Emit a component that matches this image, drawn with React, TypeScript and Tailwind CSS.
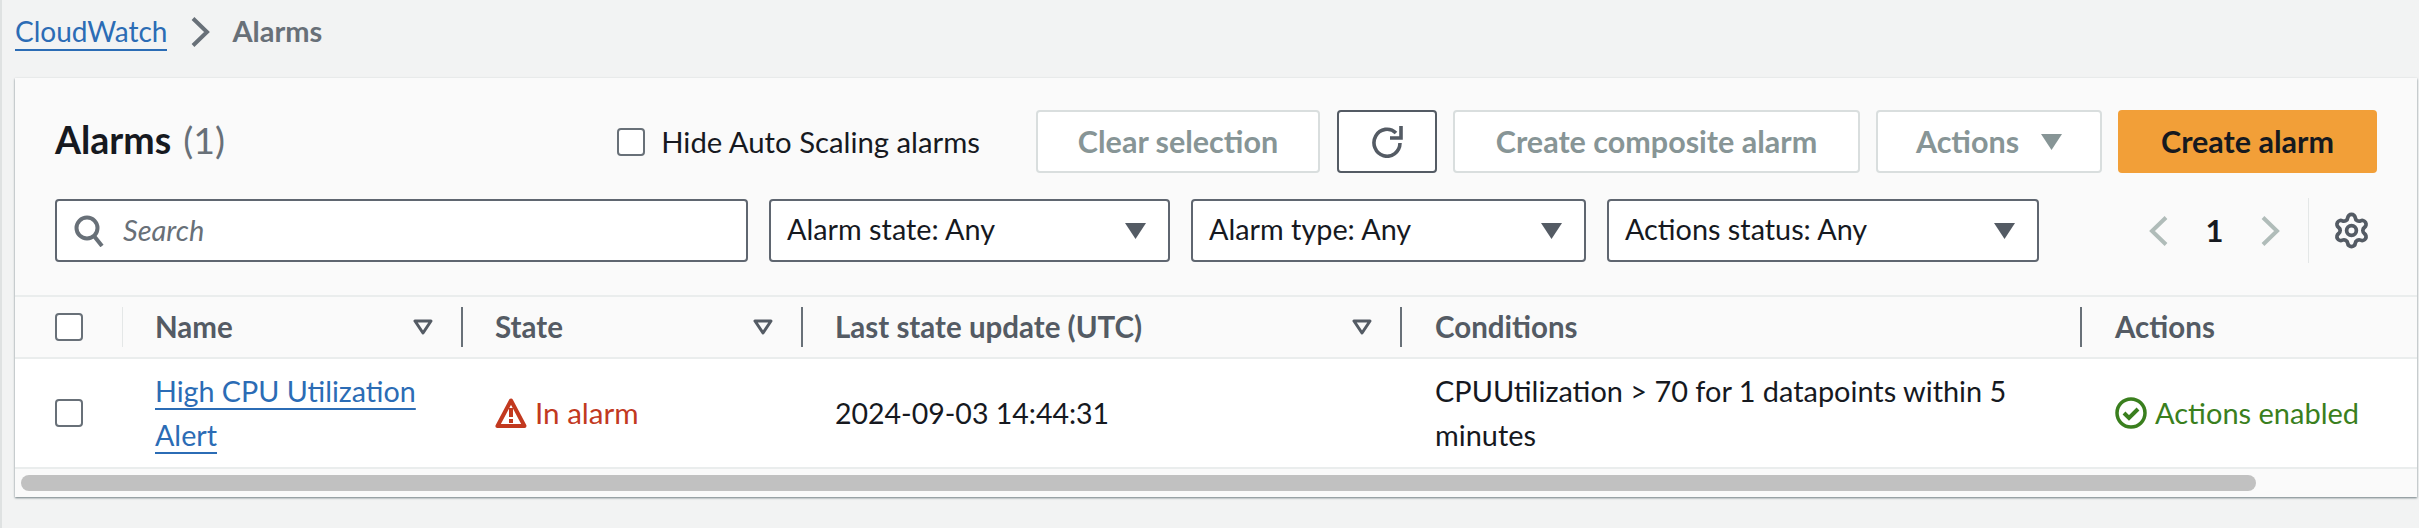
import { Settings } from 'lucide-react'

const font = 'font-["Lato","Liberation_Sans",sans-serif]'

function Caret({ className }: { className: string }) {
  return (
    <svg viewBox="0 0 21 16" className={className} aria-hidden="true">
      <path d="M0 0h21L10.5 16z" fill="currentColor" />
    </svg>
  )
}

function SortIcon() {
  return (
    <svg viewBox="0 0 20 16" className="h-4 w-5 text-[#545b64]" aria-hidden="true">
      <path d="M2 2h16L10 14z" fill="none" stroke="currentColor" strokeWidth="3" strokeLinejoin="round" />
    </svg>
  )
}

function Chevron({ left, className }: { left?: boolean; className: string }) {
  return (
    <svg viewBox="0 0 19 30" className={className} aria-hidden="true">
      <path d={left ? 'M17 1.5 3 15l14 13.5' : 'M2 1.5 16 15 2 28.5'} fill="none" stroke="currentColor" strokeWidth="4" />
    </svg>
  )
}

function Checkbox() {
  return <span className="block h-7 w-7 rounded-[4px] border-2 border-[#687078] bg-white" />
}

function Select({ label, width }: { label: string; width: string }) {
  return (
    <div className={`flex h-full items-center justify-between rounded-[4px] border-2 border-[#5f6670] bg-white pl-4 pr-[22px] text-[28.8px] text-[#16191f] ${width}`}>
      <span className="pb-[2px]">{label}</span>
      <Caret className="h-4 w-[21px] text-[#545b64]" />
    </div>
  )
}

function DisabledButton({ label, width, caret }: { label: string; width: string; caret?: boolean }) {
  return (
    <div className={`flex h-full items-center justify-center gap-[22px] rounded-[4px] border-2 border-[#d9dede] bg-white text-[30.5px] font-bold text-[#879596] ${width}`}>
      <span>{label}</span>
      {caret && <Caret className="h-4 w-[21px]" />}
    </div>
  )
}

function HeadCell({ label, sort, strong }: { label?: string; sort?: boolean; strong?: boolean }) {
  return (
    <div className={`relative flex items-center justify-between pr-[30px] text-[29.5px] font-bold text-[#545b64] ${sort ? 'pl-8' : 'pl-[33px]'}`}>
      <span>{label}</span>
      {sort && <SortIcon />}
      {/* column resizer */}
      {strong && <span className="absolute right-0 top-[10px] h-10 w-[2px] bg-[#687078]" />}
    </div>
  )
}

export default function App() {
  return (
    <div className={`h-[528px] w-[2419px] overflow-hidden border-l-2 border-[#dfe2e2] bg-[#f2f3f3] text-[29px] ${font}`}>
      {/* Breadcrumb */}
      <nav className="flex h-[78px] items-start pl-[13px] pt-[13px]">
        <a className="border-b-2 border-[#2b6cb5] text-[28px] leading-[36px] text-[#2b6cb5]">CloudWatch</a>
        <Chevron className="ml-6 mt-[4px] h-[30px] w-[19px] text-[#687078]" />
        <span className="ml-[22px] font-bold leading-[36px] text-[#687078]">Alarms</span>
      </nav>

      <section className="ml-[13px] mr-[2px] h-[419px] bg-[#fafafa] shadow-[0_1px_2px_rgba(0,28,36,0.55)]">
        <div className="pl-10 pr-10 pt-8">
          {/* Title and buttons */}
          <div className="flex h-[63px] items-center">
            <h1 className="flex items-baseline gap-3 pb-[2px] text-[37.5px] font-bold text-[#16191f]">
              Alarms <span className="font-normal text-[#687078]">(1)</span>
            </h1>
            <label className="ml-auto flex items-center gap-4 text-[29.3px] text-[#16191f]">
              <Checkbox />
              Hide Auto Scaling alarms
            </label>
            <div className="ml-14 flex h-full gap-4">
              <DisabledButton label="Clear selection" width="w-[284px] mr-[1px]" />
              <div className="flex h-full w-[100px] items-center justify-center rounded-[4px] border-2 border-[#545b64] bg-white">
                <svg viewBox="0 0 32 32" className="h-8 w-8" aria-hidden="true">
                  <path d="M25 7A13 13.5 0 1 0 29 17" fill="none" stroke="#545b64" strokeWidth="3.6" />
                  <path d="M30 0v12H19" fill="none" stroke="#545b64" strokeWidth="3.6" />
                </svg>
              </div>
              <DisabledButton label="Create composite alarm" width="w-[407px]" />
              <DisabledButton label="Actions" width="w-[226px]" caret />
              <div className="flex h-full w-[259px] items-center justify-center rounded-[4px] bg-[#f29f38] text-[30.5px] font-bold text-[#16191f]">
                Create alarm
              </div>
            </div>
          </div>

          {/* Search and filters */}
          <div className="mt-[26px] flex h-[63px] items-center gap-[21px]">
            <div className="flex h-full w-[693px] items-center gap-[18px] rounded-[4px] border-2 border-[#5f6670] bg-white pl-4">
              <svg viewBox="0 0 32 32" className="h-8 w-8" aria-hidden="true">
                <circle cx="14" cy="13" r="10.5" fill="none" stroke="#687078" strokeWidth="4" />
                <path d="m21 21 8 10" stroke="#687078" strokeWidth="4" />
              </svg>
              <span className="pb-[2px] italic text-[#687078]">Search</span>
            </div>
            <Select label="Alarm state: Any" width="w-[401px]" />
            <Select label="Alarm type: Any" width="w-[395px]" />
            <Select label="Actions status: Any" width="w-[432px]" />

            {/* Pager */}
            <div className="ml-auto flex h-[65px] items-center pr-[6px]">
              <Chevron left className="h-[30px] w-[19px] text-[#b0bcb9]" />
              <span className="w-[93px] text-center text-[31px] font-bold text-[#16191f]">1</span>
              <Chevron className="h-[30px] w-[19px] text-[#b0bcb9]" />
              <span className="ml-7 h-full w-[1px] bg-[#e4e7e7]" />
              <Settings className="ml-[23px] h-[39px] w-[39px] text-[#545b64]" strokeWidth={2.3} />
            </div>
          </div>
        </div>

        {/* Table */}
        <div className="mt-[33px]">
          <div className="grid h-[64px] grid-cols-[108px_340px_340px_599px_680px_1fr] border-y-2 border-[#eaeded]">
            <div className="relative flex items-center pl-10">
              <Checkbox />
              <span className="absolute right-0 top-[10px] h-10 w-[1px] bg-[#e4e7e7]" />
            </div>
            <HeadCell label="Name" sort strong />
            <HeadCell label="State" sort strong />
            <HeadCell label="Last state update (UTC)" sort strong />
            <HeadCell label="Conditions" strong />
            <HeadCell label="Actions" />
          </div>
          <div className="grid h-[110px] grid-cols-[108px_340px_340px_599px_680px_1fr] items-center border-b-2 border-[#eaeded] bg-white leading-[44px] text-[#16191f]">
            <div className="pl-10">
              <Checkbox />
            </div>
            <div className="pl-8 pr-[30px] text-[28.7px]">
              <a className="text-[#2b6cb5] underline decoration-2 underline-offset-[6px]">High CPU Utilization Alert</a>
            </div>
            <div className="flex items-center gap-2 pl-8 text-[29.6px] text-[#c2391f]">
              <svg viewBox="0 0 32 32" className="h-8 w-8" aria-hidden="true">
                <path d="M16 3.5 2.5 29h27z" fill="none" stroke="currentColor" strokeWidth="4" strokeLinejoin="round" />
                <path d="M16 11v9M16 22v4" stroke="currentColor" strokeWidth="4" />
              </svg>
              In alarm
            </div>
            <div className="pl-8 text-[28.5px]">2024-09-03 14:44:31</div>
            <div className="pl-[33px] pr-[40px] text-[28.9px]">CPUUtilization &gt; 70 for 1 datapoints within 5 minutes</div>
            <div className="flex items-center gap-2 pl-[33px] text-[#3a7f1e]">
              <svg viewBox="0 0 32 32" className="h-8 w-8" aria-hidden="true">
                <circle cx="16" cy="16" r="14" fill="none" stroke="currentColor" strokeWidth="3.5" />
                <path d="m9 16 5 5 9-9" fill="none" stroke="currentColor" strokeWidth="4" />
              </svg>
              Actions enabled
            </div>
          </div>
          {/* Scroll bar */}
          <div className="pl-[6px] pt-[6px]">
            <div className="h-4 w-[2235px] rounded-full bg-[#c1c1c1]" />
          </div>
        </div>
      </section>
    </div>
  )
}
